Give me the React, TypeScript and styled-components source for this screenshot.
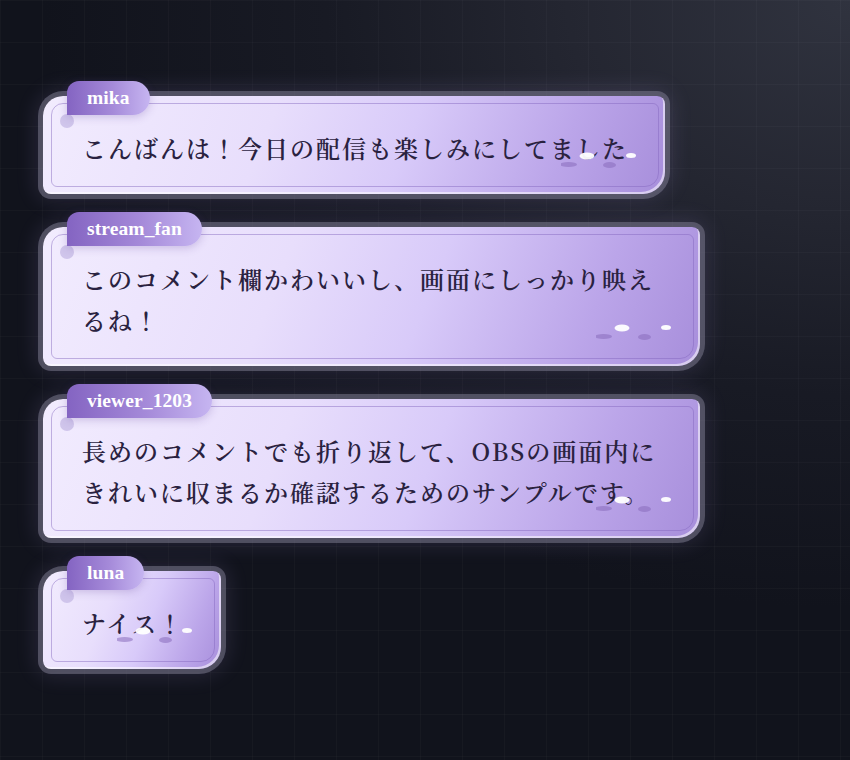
import styled, { createGlobalStyle } from "styled-components";

interface IComment {
  id: number;
  name: string;
  text: string;
}

const comments: IComment[] = [
  { id: 1, name: "mika", text: "こんばんは！今日の配信も楽しみにしてました" },
  { id: 2, name: "stream_fan", text: "このコメント欄かわいいし、画面にしっかり映えるね！" },
  {
    id: 3,
    name: "viewer_1203",
    text: "長めのコメントでも折り返して、OBSの画面内にきれいに収まるか確認するためのサンプルです。",
  },
  { id: 4, name: "luna", text: "ナイス！" },
];

const GlobalStyle = createGlobalStyle`
  html, body {
    margin: 0;
    padding: 0;
  }
  body {
    min-height: 760px;
    background-color: #13151e;
    background-image:
      linear-gradient(rgba(255,255,255,0.025) 1px, transparent 1px),
      linear-gradient(90deg, rgba(255,255,255,0.025) 1px, transparent 1px),
      radial-gradient(ellipse 95% 80% at 100% 0%, #30333f 0%, #242631 35%, #181a24 65%, #11131c 100%);
    background-size: 42px 42px, 42px 42px, 100% 100%;
    font-family: "Noto Serif CJK JP", "Noto Sans CJK JP", sans-serif;
  }
`;

const Feed = styled.div`
  display: flex;
  flex-direction: column;
  align-items: flex-start;
  gap: 18px;
  padding: 81px 0 40px 43px;
  min-height: 760px;
  box-sizing: border-box;
`;

const Item = styled.div`
  display: flex;
  flex-direction: column;
  align-items: flex-start;
  max-width: 657px;
`;

const NameTag = styled.div`
  position: relative;
  z-index: 2;
  margin-left: 24px;
  margin-bottom: -19px;
  height: 34px;
  padding: 0 20px;
  display: flex;
  align-items: center;
  border-radius: 12px 17px 17px 0;
  background: linear-gradient(90deg, #8464c2 0%, #a58ad9 55%, #c6b5f1 100%);
  box-shadow: 0 2px 8px rgba(90, 60, 150, 0.25);
  color: #ffffff;
  font-family: "Liberation Serif", "Times New Roman", serif;
  font-weight: 700;
  font-size: 19.5px;
  letter-spacing: 0.1px;
`;

const Card = styled.div`
  position: relative;
  box-sizing: border-box;
  padding: 31px 37px 26px 39px;
  border-radius: 20px 8px 22px 8px;
  background: linear-gradient(112deg, #f2ecfe 0%, #e8defc 36%, #d8caf9 58%, #bba5e9 82%, #a78edb 100%);
  box-shadow:
    inset -2px -2px 0 rgba(255, 255, 255, 0.55),
    0 0 0 5px rgba(120, 118, 138, 0.55),
    0 0 22px 6px rgba(190, 172, 255, 0.14);

  &::before {
    content: "";
    position: absolute;
    top: 7px;
    left: 8px;
    right: 6px;
    bottom: 7px;
    border: 1px solid rgba(128, 100, 188, 0.45);
    border-radius: 12px 6px 14px 6px;
    pointer-events: none;
  }
`;

const Dot = styled.span`
  position: absolute;
  top: 18px;
  left: 17px;
  width: 14px;
  height: 14px;
  border-radius: 50%;
  background: rgba(196, 184, 228, 0.75);
`;

const Message = styled.p`
  position: relative;
  z-index: 1;
  margin: 0;
  color: #2a2240;
  font-size: 24px;
  font-weight: 600;
  line-height: 41px;
  letter-spacing: 2px;
  word-break: break-all;
`;

const SparkleSvg = styled.svg`
  position: absolute;
  right: 24px;
  bottom: 22px;
  width: 80px;
  height: 22px;
  z-index: 2;
  pointer-events: none;
`;

function Sparkles() {
  return (
    <SparkleSvg viewBox="0 0 80 22">
      <ellipse cx="7.5" cy="14.5" rx="8.5" ry="2.5" fill="rgba(136,108,188,0.55)" />
      <ellipse cx="48.5" cy="15" rx="6.5" ry="3" fill="rgba(136,108,188,0.55)" />
      <ellipse cx="26" cy="6" rx="7.5" ry="3.5" fill="rgba(255,255,255,0.95)" />
      <ellipse cx="70" cy="5.5" rx="5" ry="2.5" fill="rgba(255,255,255,0.95)" />
    </SparkleSvg>
  );
}

function App() {
  return (
    <>
      <GlobalStyle />
      <Feed>
        {comments.map((c) => (
          <Item key={c.id}>
            <NameTag>{c.name}</NameTag>
            <Card>
              <Dot />
              <Message>{c.text}</Message>
              <Sparkles />
            </Card>
          </Item>
        ))}
      </Feed>
    </>
  );
}

export default App;
